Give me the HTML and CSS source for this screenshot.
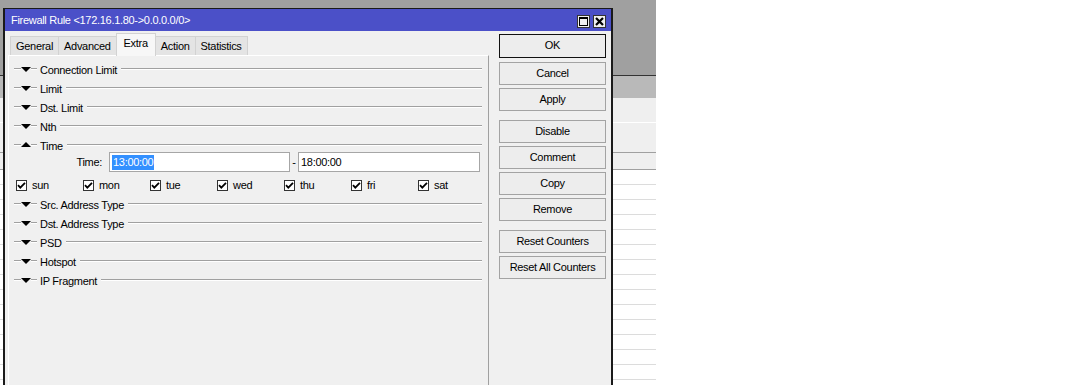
FILE: index.html
```html
<!DOCTYPE html>
<html>
<head>
<meta charset="utf-8">
<title>Firewall Rule</title>
<link rel="stylesheet" href="styles.css">
</head>
<body>
<div class="desk">
  <div class="d-top"></div>
  <div class="d-toolbar"></div>
  <div class="d-bar1"></div>
  <div class="d-bar2"></div>
  <div class="d-head"></div>
  <div class="d-rows"></div>
</div>

<div class="win">
  <div class="titlebar">
    <span class="title">Firewall Rule &lt;172.16.1.80-&gt;0.0.0.0/0&gt;</span>
    <span class="tb-btns">
      <span class="tb-btn"><svg width="11" height="11" viewBox="0 0 11 11"><rect x="1.5" y="1.5" width="8" height="8" fill="none" stroke="#000" stroke-width="1"/><rect x="1" y="1" width="9" height="2" fill="#000"/></svg></span>
      <span class="tb-btn"><svg width="11" height="11" viewBox="0 0 11 11"><path d="M2 2 L9 9 M9 2 L2 9" stroke="#000" stroke-width="2.2" fill="none"/></svg></span>
    </span>
  </div>
  <div class="body">
    <div class="left">
      <div class="tabs">
        <div class="tab">General</div>
        <div class="tab">Advanced</div>
        <div class="tab active">Extra</div>
        <div class="tab">Action</div>
        <div class="tab">Statistics</div>
      </div>
      <div class="panel">
        <div class="sec"><span class="ln lead"></span><span class="tri"></span><span class="ln lead2"></span><span class="lbl">Connection Limit</span><span class="ln rule"></span></div>
        <div class="sec"><span class="ln lead"></span><span class="tri"></span><span class="ln lead2"></span><span class="lbl">Limit</span><span class="ln rule"></span></div>
        <div class="sec"><span class="ln lead"></span><span class="tri"></span><span class="ln lead2"></span><span class="lbl">Dst. Limit</span><span class="ln rule"></span></div>
        <div class="sec"><span class="ln lead"></span><span class="tri"></span><span class="ln lead2"></span><span class="lbl">Nth</span><span class="ln rule"></span></div>
        <div class="sec open"><span class="ln lead"></span><span class="tri up"></span><span class="ln lead2"></span><span class="lbl">Time</span><span class="ln rule"></span></div>
        <div class="time-row">
          <span class="time-lbl">Time:</span>
          <span class="field f1"><span class="sel">13:00:00</span></span>
          <span class="dash">-</span>
          <span class="field f2">18:00:00</span>
        </div>
        <div class="days">
          <span class="day"><span class="cb"><svg width="9" height="9" viewBox="0 0 9 9"><path d="M1 4.2 L3.3 6.6 L8 1.8" stroke="#000" stroke-width="1.8" fill="none"/></svg></span>sun</span>
          <span class="day"><span class="cb"><svg width="9" height="9" viewBox="0 0 9 9"><path d="M1 4.2 L3.3 6.6 L8 1.8" stroke="#000" stroke-width="1.8" fill="none"/></svg></span>mon</span>
          <span class="day"><span class="cb"><svg width="9" height="9" viewBox="0 0 9 9"><path d="M1 4.2 L3.3 6.6 L8 1.8" stroke="#000" stroke-width="1.8" fill="none"/></svg></span>tue</span>
          <span class="day"><span class="cb"><svg width="9" height="9" viewBox="0 0 9 9"><path d="M1 4.2 L3.3 6.6 L8 1.8" stroke="#000" stroke-width="1.8" fill="none"/></svg></span>wed</span>
          <span class="day"><span class="cb"><svg width="9" height="9" viewBox="0 0 9 9"><path d="M1 4.2 L3.3 6.6 L8 1.8" stroke="#000" stroke-width="1.8" fill="none"/></svg></span>thu</span>
          <span class="day"><span class="cb"><svg width="9" height="9" viewBox="0 0 9 9"><path d="M1 4.2 L3.3 6.6 L8 1.8" stroke="#000" stroke-width="1.8" fill="none"/></svg></span>fri</span>
          <span class="day"><span class="cb"><svg width="9" height="9" viewBox="0 0 9 9"><path d="M1 4.2 L3.3 6.6 L8 1.8" stroke="#000" stroke-width="1.8" fill="none"/></svg></span>sat</span>
        </div>
        <div class="sec"><span class="ln lead"></span><span class="tri"></span><span class="ln lead2"></span><span class="lbl">Src. Address Type</span><span class="ln rule"></span></div>
        <div class="sec"><span class="ln lead"></span><span class="tri"></span><span class="ln lead2"></span><span class="lbl">Dst. Address Type</span><span class="ln rule"></span></div>
        <div class="sec"><span class="ln lead"></span><span class="tri"></span><span class="ln lead2"></span><span class="lbl">PSD</span><span class="ln rule"></span></div>
        <div class="sec"><span class="ln lead"></span><span class="tri"></span><span class="ln lead2"></span><span class="lbl">Hotspot</span><span class="ln rule"></span></div>
        <div class="sec"><span class="ln lead"></span><span class="tri"></span><span class="ln lead2"></span><span class="lbl">IP Fragment</span><span class="ln rule"></span></div>
      </div>
    </div>
    <div class="buttons">
      <div class="btn default">OK</div>
      <div class="btn">Cancel</div>
      <div class="btn group-end">Apply</div>
      <div class="btn">Disable</div>
      <div class="btn">Comment</div>
      <div class="btn">Copy</div>
      <div class="btn group-end">Remove</div>
      <div class="btn">Reset Counters</div>
      <div class="btn">Reset All Counters</div>
    </div>
  </div>
</div>
</body>
</html>
```

FILE: styles.css
```css
* { box-sizing: border-box; }
html, body {
  margin: 0;
  padding: 0;
  background: #fff;
  font-family: "Liberation Sans", Arial, sans-serif;
  font-size: 11px;
  letter-spacing: -0.3px;
  color: #000;
}
body {
  width: 1089px;
  height: 385px;
  overflow: hidden;
  position: relative;
}

/* background application */
.desk {
  width: 656px;
  height: 385px;
  display: flex;
  flex-direction: column;
}
.d-top { height: 75px; background: #a0a0a0; flex: none; }
.d-toolbar { height: 23px; background: #b9b9b9; border-top: 1px solid #333; flex: none; }
.d-bar1 { height: 25px; background: #efefef; border-bottom: 1px solid #fff; flex: none; }
.d-bar2 { height: 30px; background: #efefef; border-bottom: 1px solid #a0a0a0; flex: none; }
.d-head { height: 17px; background: #efefef; border-bottom: 1px solid #a0a0a0; flex: none; }
.d-rows {
  flex: 1;
  background: repeating-linear-gradient(to bottom, #fff 0, #fff 14px, #dcdcdc 14px, #dcdcdc 15px);
}

/* window */
.win {
  position: absolute;
  left: 3px;
  top: 8px;
  width: 610px;
  bottom: -4px;
  border: 2px solid #1a1a1a;
  border-top-width: 1px;
  background: #f0f0f0;
  display: flex;
  flex-direction: column;
}
.titlebar {
  height: 22px;
  background: #4b50c8;
  display: flex;
  align-items: center;
  justify-content: space-between;
  padding: 0 5px 0 6px;
  flex: none;
}
.title { color: #fff; font-size: 11px; letter-spacing: -0.3px; }
.tb-btns { display: flex; gap: 3px; margin-top: 2px; }
.tb-btn {
  width: 13px;
  height: 13px;
  background: #f0f0f0;
  border: 1px solid #333;
  display: flex;
  align-items: center;
  justify-content: center;
}

.body {
  flex: 1;
  display: flex;
  padding-top: 2px;
}
.left {
  margin-left: 3px;
  width: 481px;
  display: flex;
  flex-direction: column;
}
.tabs {
  height: 22px;
  display: flex;
  align-items: flex-end;
  padding-left: 2px;
  position: relative;
  z-index: 1;
}
.tab {
  height: 19px;
  line-height: 18px;
  padding: 0 5px;
  background: #e4e4e4;
  border: 1px solid #d2d2d2;
  border-bottom: none;
  margin-right: -1px;
}
.tab.active {
  height: 23px;
  line-height: 19px;
  background: #f7f7f7;
  margin-bottom: -1px;
  padding: 0 7px;
}
.panel {
  flex: 1;
  border-top: 1px solid #fff;
  border-left: 1px solid #fff;
  border-right: 1px solid #a0a0a0;
  padding: 5px 6px 0 5px;
}

.sec {
  height: 19px;
  display: flex;
  align-items: flex-start;
}
.sec.open { height: 15px; }
.ln {
  height: 2px;
  border-top: 1px solid #a0a0a0;
  border-bottom: 1px solid #fff;
  margin-top: 7px;
}
.lead { width: 7px; }
.lead2 { width: 6px; }
.rule { flex: 1; }
.tri {
  width: 0;
  height: 0;
  margin-top: 6px;
  border-left: 5px solid transparent;
  border-right: 5px solid transparent;
  border-top: 5px solid #000;
}
.tri.up {
  border-top: none;
  border-bottom: 5px solid #000;
  margin-top: 5px;
}
.lbl {
  line-height: 19px;
  padding: 0 4px 0 3px;
}

.time-row {
  height: 21px;
  display: flex;
  align-items: flex-start;
}
.time-lbl {
  width: 88px;
  text-align: right;
  line-height: 20px;
  margin-right: 7px;
}
.field {
  height: 20px;
  background: #fff;
  border: 1px solid #a6a6a6;
  line-height: 18px;
  padding-left: 2px;
}
.f1 { width: 181px; }
.f2 { width: 182px; }
.sel {
  display: inline-block;
  background: #3390ff;
  color: #fff;
  line-height: 15px;
  padding: 0 1px 0 1px;
  margin-top: 1px;
}
.dash {
  width: 8px;
  text-align: center;
  line-height: 20px;
}

.days {
  height: 23px;
  display: grid;
  grid-template-columns: repeat(7, 67px);
  padding-left: 2px;
  align-items: center;
}
.day {
  display: flex;
  align-items: center;
  line-height: 13px;
  margin-top: 1px;
}
.cb {
  width: 11px;
  height: 11px;
  border: 1px solid #333;
  background: #fff;
  margin-right: 5px;
  display: flex;
  align-items: center;
  justify-content: center;
}

.buttons {
  margin-left: 10px;
  width: 107px;
  display: flex;
  flex-direction: column;
  padding-top: 1px;
}
.btn {
  height: 23px;
  margin-bottom: 3px;
  border: 1px solid #a3a3a3;
  background: #ededed;
  text-align: center;
  line-height: 21px;
}
.btn.default {
  height: 24px;
  margin-bottom: 4px;
  border-color: #111;
}
.btn.group-end { margin-bottom: 9px; }
```
